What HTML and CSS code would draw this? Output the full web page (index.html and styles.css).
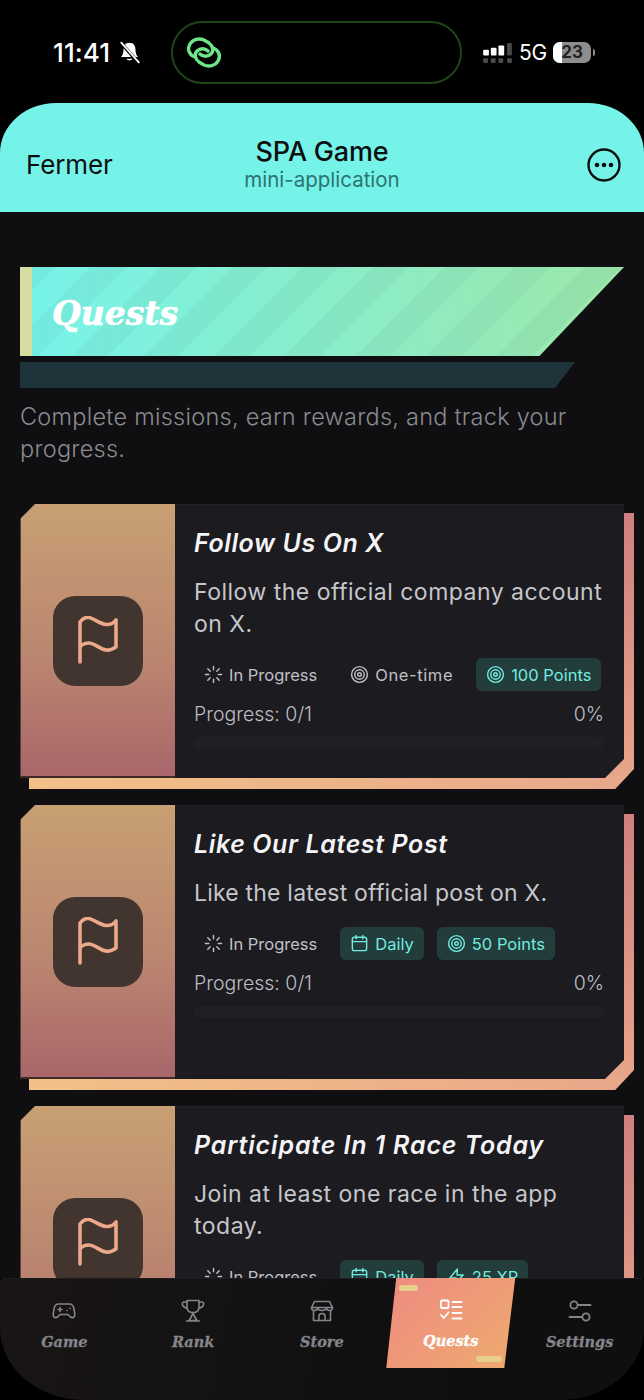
FILE: index.html
```html
<!DOCTYPE html>
<html lang="en">
<head>
<meta charset="utf-8">
<title>SPA Game</title>
<link rel="stylesheet" href="styles.css">
</head>
<body>
<svg class="defs" width="0" height="0" aria-hidden="true">
  <defs>
    <symbol id="i-flag" viewBox="0 0 40 50"><path d="M2 46V6C5 2 8 1 11 1.500C16 2.500 22 8 28 8.500C32 8.800 36 6.500 38 4V31C35 33 31 34.500 28 34C22 33 16 27 11 27C7 27 4 28.500 2 31" fill="none" stroke="currentColor" stroke-width="3.600" stroke-linecap="round" stroke-linejoin="round"/></symbol>
    <symbol id="i-load" viewBox="0 0 20 20"><path d="M10 1.5V5M10 15V18.500M1.500 10H5M15 10H18.500M4 4L6.500 6.500M13.500 13.500L16 16M4 16L6.500 13.500M13.500 6.500L16 4" fill="none" stroke="currentColor" stroke-width="1.500" stroke-linecap="round"/></symbol>
    <symbol id="i-target" viewBox="0 0 20 20"><g fill="none" stroke="currentColor" stroke-width="1.500"><circle cx="10" cy="10" r="8.300"/><circle cx="10" cy="10" r="5"/><circle cx="10" cy="10" r="1.900"/></g></symbol>
    <symbol id="i-cal" viewBox="0 0 20 20"><g fill="none" stroke="currentColor" stroke-width="1.500" stroke-linecap="round" stroke-linejoin="round"><rect x="2.500" y="3.500" width="15" height="14" rx="2"/><path d="M2.500 8H17.500M6.500 1.500V5M13.500 1.500V5"/></g></symbol>
    <symbol id="i-zap" viewBox="0 0 20 20"><path d="M11 2L3 11.500H9.500L8.500 18L17 8.500H10.500Z" fill="none" stroke="currentColor" stroke-width="1.500" stroke-linejoin="round"/></symbol>
  </defs>
</svg>
<div class="phone">
  <div class="status">
    <div class="status-left">
      <span class="time">11:41</span>
      <svg class="bell" viewBox="0 0 20 20"><path d="M10 1.500C6.500 1.500 4.800 4 4.800 7.500C4.800 11 3.800 12.500 2.500 14H17.500C16.200 12.500 15.200 11 15.200 7.500C15.200 4 13.500 1.500 10 1.500ZM7.500 15.500C8 17.500 12 17.500 12.500 15.500Z" fill="#fff"/><path d="M2 1L18 19" stroke="#000" stroke-width="3"/><path d="M2.500 1L18.500 19" stroke="#fff" stroke-width="1.600"/></svg>
    </div>
    <div class="island">
      <svg class="link" viewBox="0 0 36 32"><g fill="none" stroke="#6fe58a" stroke-width="3.400" stroke-linecap="round"><path d="M9 20C3 18 1 12 4 7C7 2 13 1 18 3L23 6C27 9 28 14 25 17C22 20 17 20 14 17"/><path d="M27 11C33 13 35 19 32 24C29 29 23 30 18 28L13 25C9 22 8 17 11 14C14 11 19 11 22 14"/></g></svg>
    </div>
    <div class="status-right">
      <svg class="signal" viewBox="0 0 30 22"><g fill="#fff"><rect x="0" y="7" width="6" height="6" rx="1"/><rect x="8" y="5" width="6" height="8" rx="1"/><rect x="16" y="2.500" width="6" height="10.500" rx="1"/></g><g fill="#4a4a4a"><rect x="25" y="0" width="5" height="13" rx="1"/><rect x="0" y="16" width="5" height="5" rx="1"/><rect x="8" y="16" width="5" height="5" rx="1"/><rect x="16" y="16" width="5" height="5" rx="1"/><rect x="25" y="16" width="5" height="5" rx="1"/></g></svg>
      <span class="net">5G</span>
      <span class="battery"><span class="battery-fill"></span><span class="battery-num">23</span></span>
      <span class="battery-tip"></span>
    </div>
  </div>

  <header class="topbar">
    <div class="top-left">Fermer</div>
    <div class="top-center">
      <div class="top-title">SPA Game</div>
      <div class="top-sub">mini-application</div>
    </div>
    <div class="top-right">
      <svg class="more" viewBox="0 0 34 34"><circle cx="17" cy="17" r="15.500" fill="none" stroke="#0b0f0f" stroke-width="2.400"/><circle cx="10" cy="17" r="2.300" fill="#0b0f0f"/><circle cx="17" cy="17" r="2.300" fill="#0b0f0f"/><circle cx="24" cy="17" r="2.300" fill="#0b0f0f"/></svg>
    </div>
  </header>

  <main class="main">
    <div class="banner"><div class="banner-edge"></div><h1 class="banner-title">Quests</h1></div>
    <div class="underbar"></div>
    <p class="lead">Complete missions, earn rewards, and track your progress.</p>

    <article class="card-wrap">
      <div class="card-back"></div>
      <div class="card">
        <div class="panel"><div class="panel-box"><svg class="flag"><use href="#i-flag"/></svg></div></div>
        <div class="body">
          <h2 class="card-title">Follow Us On X</h2>
          <p class="card-desc">Follow the official company account on X.</p>
          <div class="chips">
            <span class="chip"><svg class="chip-ic"><use href="#i-load"/></svg>In Progress</span>
            <span class="chip chip-wide"><svg class="chip-ic"><use href="#i-target"/></svg>One-time</span>
            <span class="chip chip-on"><svg class="chip-ic"><use href="#i-target"/></svg>100 Points</span>
          </div>
          <div class="prog"><span>Progress: 0/1</span><span>0%</span></div>
          <div class="track"></div>
        </div>
      </div>
    </article>

    <article class="card-wrap">
      <div class="card-back"></div>
      <div class="card">
        <div class="panel"><div class="panel-box"><svg class="flag"><use href="#i-flag"/></svg></div></div>
        <div class="body">
          <h2 class="card-title">Like Our Latest Post</h2>
          <p class="card-desc card-desc-tight">Like the latest official post on X.</p>
          <div class="chips">
            <span class="chip"><svg class="chip-ic"><use href="#i-load"/></svg>In Progress</span>
            <span class="chip chip-on"><svg class="chip-ic"><use href="#i-cal"/></svg>Daily</span>
            <span class="chip chip-on"><svg class="chip-ic"><use href="#i-target"/></svg>50 Points</span>
          </div>
          <div class="prog"><span>Progress: 0/1</span><span>0%</span></div>
          <div class="track"></div>
        </div>
      </div>
    </article>

    <article class="card-wrap">
      <div class="card-back"></div>
      <div class="card">
        <div class="panel"><div class="panel-box"><svg class="flag"><use href="#i-flag"/></svg></div></div>
        <div class="body">
          <h2 class="card-title card-title-wide">Participate In 1 Race Today</h2>
          <p class="card-desc">Join at least one race in the app today.</p>
          <div class="chips">
            <span class="chip"><svg class="chip-ic"><use href="#i-load"/></svg>In Progress</span>
            <span class="chip chip-on"><svg class="chip-ic"><use href="#i-cal"/></svg>Daily</span>
            <span class="chip chip-on"><svg class="chip-ic"><use href="#i-zap"/></svg>25 XP</span>
          </div>
        </div>
      </div>
    </article>
  </main>

  <nav class="nav">
    <div class="nav-inner">
      <a class="tab">
        <svg class="tab-ic" viewBox="0 0 24 24"><g fill="none" stroke="currentColor" stroke-width="1.600" stroke-linecap="round" stroke-linejoin="round"><path d="M6.500 5H17.500C20 5 21.500 7 22 10L22.800 15.500C23 18 20.500 19.500 18.500 18L16 15.500H8L5.500 18C3.500 19.500 1 18 1.200 15.500L2 10C2.500 7 4 5 6.500 5Z"/><path d="M6 10.500H10M8 8.500V12.500"/><path d="M15 11.500H15.100M18 9.500H18.100"/></g></svg>
        <span class="tab-label">Game</span>
      </a>
      <a class="tab">
        <svg class="tab-ic" viewBox="0 0 24 24"><g fill="none" stroke="currentColor" stroke-width="1.600" stroke-linecap="round" stroke-linejoin="round"><path d="M6 1.500H18V8C18 11.500 15.500 13.500 12 13.500C8.500 13.500 6 11.500 6 8Z"/><path d="M6 3H3.500C1.500 3 1 4.500 1.500 6C2 7.500 3.500 8.500 6.300 9.500M18 3H20.500C22.500 3 23 4.500 22.500 6C22 7.500 20.500 8.500 17.700 9.500"/><path d="M12 13.500C11.500 16 10 18.500 8 21.500H16C14 18.500 12.500 16 12 13.500ZM5.500 22H18.500"/></g></svg>
        <span class="tab-label">Rank</span>
      </a>
      <a class="tab">
        <svg class="tab-ic" viewBox="0 0 24 24"><g fill="none" stroke="currentColor" stroke-width="1.600" stroke-linecap="round" stroke-linejoin="round"><path d="M4.500 2.500H19.500L22.500 8.500C22.500 10.500 21 11.500 19.500 11.500C18 11.500 16.500 10.500 16.500 9C16 10.500 14 11.500 12 11.500C10 11.500 8 10.500 7.500 9C7.500 10.500 6 11.500 4.500 11.500C3 11.500 1.500 10.500 1.500 8.500Z"/><path d="M3.500 11.500V21.500H20.500V11.500M1.500 8.500H22.500"/><path d="M9 21.500V17C9 15.500 10 14.500 12 14.500C14 14.500 15 15.500 15 17V21.500"/></g></svg>
        <span class="tab-label">Store</span>
      </a>
      <a class="tab tab-active">
        <span class="tab-pill tab-pill-top"></span>
        <span class="tab-pill tab-pill-bot"></span>
        <svg class="tab-ic" viewBox="0 0 24 24"><g fill="none" stroke="currentColor" stroke-width="1.800" stroke-linecap="round" stroke-linejoin="round"><rect x="2" y="2.500" width="7.500" height="7.500" rx="1"/><path d="M13.500 4H22.500M13.500 9H22.500M13.500 15H22.500M13.500 20.500H22.500"/><path d="M2 17L4.800 20L9.500 14.500"/></g></svg>
        <span class="tab-label">Quests</span>
      </a>
      <a class="tab">
        <svg class="tab-ic" viewBox="0 0 24 24"><g fill="none" stroke="currentColor" stroke-width="1.800" stroke-linecap="round"><circle cx="6" cy="6" r="3.600"/><path d="M10 6H22.500"/><circle cx="18" cy="18" r="3.600"/><path d="M1.500 18H14"/></g></svg>
        <span class="tab-label">Settings</span>
      </a>
    </div>
  </nav>
</div>
</body>
</html>
```

FILE: styles.css
```css
* { box-sizing: border-box; }
html, body { margin: 0; padding: 0; background: #000; }
.defs { display: block; height: 0; }
.phone {
  width: 644px; height: 1400px; position: relative; overflow: hidden;
  background: #000; font-family: Inter, "Liberation Sans", sans-serif; color: #fff;
}

/* status bar */
.status { height: 103px; display: flex; align-items: flex-start; padding-top: 21px; }
.status-left { width: 171px; height: 62px; padding-left: 53px; display: flex; align-items: center; gap: 9px; }
.time { font-family: Inter, sans-serif; font-size: 26px; font-weight: 500; letter-spacing: 0.1px; color: #fff; }
.bell { width: 23px; height: 23px; margin-left: -1px; }
.island {
  width: 291px; height: 63px; border: 2px solid #1e4418; border-radius: 32px; background: #000;
  display: flex; align-items: center; padding-left: 12px;
}
.link { width: 38px; height: 32px; }
.status-right { flex: 1; height: 62px; display: flex; align-items: center; padding-left: 21px; }
.signal { width: 29px; height: 21px; margin-top: 2px; }
.net { font-size: 21px; font-weight: 400; margin-left: 7px; letter-spacing: -0.2px; }
.battery { position: relative; width: 38px; height: 21px; margin-left: 6px; border-radius: 7px; background: #8d8d8d; overflow: hidden; display: flex; align-items: center; justify-content: center; }
.battery-fill { position: absolute; left: 0; top: 0; bottom: 0; width: 9px; background: #fff; }
.battery-num { position: relative; font-size: 17px; font-weight: 700; color: #222; }
.battery-tip { width: 2px; height: 7px; margin-left: 2px; background: #8d8d8d; border-radius: 0 2px 2px 0; }

/* header */
.topbar {
  height: 109px; background: #76f3e9; border-radius: 56px 56px 0 0 / 50px 50px 0 0;
  display: grid; grid-template-columns: 1fr auto 1fr; align-items: center; padding: 14px 23px 0; color: #0b0f0f;
}
.top-left { font-size: 26px; font-weight: 400; padding-left: 3px; letter-spacing: -0.1px; }
.top-center { text-align: center; }
.top-title { font-size: 27px; font-weight: 500; line-height: 30px; letter-spacing: -0.2px; }
.top-sub { font-size: 20.500px; line-height: 26px; color: #2c7470; }
.top-right { display: flex; justify-content: flex-end; }
.more { width: 34px; height: 34px; }

/* main */
.main { height: 1188px; background: #0f0f12; padding: 55px 20px 0; }
.banner {
  height: 89px; display: flex; align-items: center; padding-left: 32px; position: relative;
  clip-path: polygon(0 0, 100% 0, 86% 100%, 0 100%);
  background:
    repeating-linear-gradient(135deg, rgba(70,130,120,.08) 0 25px, transparent 25px 50px),
    linear-gradient(90deg, #76f3ea, #9de8aa);
}
.banner-edge { position: absolute; left: 0; top: 0; bottom: 0; width: 12px; background: #d6dd9e; }
.banner-title {
  margin: 4px 0 0; font-family: "DejaVu Serif", serif; font-style: italic; font-weight: 700;
  font-size: 33px; color: #fff; -webkit-text-stroke: 0.6px #fff;
}
.underbar { height: 26px; margin-top: 6px; width: 555px; background: #1f333a; clip-path: polygon(0 0, 100% 0, 96.400% 100%, 0 100%); }
.lead { margin: 13px 0 39px; font-size: 23.500px; letter-spacing: 0.26px; line-height: 32px; color: #8a8a8f; font-weight: 300; }

/* cards */
.card-wrap { position: relative; height: 274px; margin-bottom: 27px; }
.card-back {
  position: absolute; left: 9px; right: -10px; top: 9px; bottom: -11px;
  background:
    linear-gradient(90deg, #f2c188, #e8a78a) bottom / 100% 14px no-repeat,
    linear-gradient(180deg, #d07f80, #e8a78a);
  clip-path: polygon(0 0, 100% 0, 100% 256px, 586px 100%, 0 100%);
}
.card {
  position: relative; height: 274px; display: flex; background: #1b1b20;
  box-shadow: inset 0 1px #222227;
  clip-path: polygon(15px 0, 100% 0, 100% 255px, 585px 100%, 0 100%, 0 15px);
}
.panel {
  width: 155px; flex: none; display: flex; align-items: center; justify-content: center;
  padding-top: 2px;
  background: linear-gradient(180deg, #c8a073, #ba8470 60%, #a9666a);
  border-left: 1px solid #5a3f38; border-bottom: 2px solid #3f2a28;
}
.panel-box { width: 90px; height: 90px; border-radius: 22px; background: #423530; display: flex; align-items: center; justify-content: center; color: #eca98a; }
.flag { width: 40px; height: 50px; }
.body { flex: 1; min-width: 0; padding: 21px 20px 0 19px; }
.card-title { margin: 0; font-size: 25px; line-height: 36px; font-weight: 600; font-style: italic; color: #f4f4f6; letter-spacing: 0.6px; white-space: nowrap; }
.card-title-wide { letter-spacing: 0.85px; }
.card-desc { margin: 15px 0 0; font-size: 23px; line-height: 32px; color: #c6c6cb; font-weight: 400; letter-spacing: 0.49px; }
.card-desc-tight { letter-spacing: 0.2px; }
.chips { display: flex; gap: 13px; margin-top: 18px; }
.chip {
  height: 33px; padding: 0 10px; display: inline-flex; align-items: center; gap: 6px;
  font-size: 16.500px; color: #c0c0c5; border-radius: 6px; white-space: nowrap;
}
.chip-wide { letter-spacing: 0.6px; }
.chip-on { background: #233c3c; color: #72ebdf; }
.chip-ic { width: 19px; height: 19px; flex: none; }
.prog { display: flex; justify-content: space-between; margin-top: 10px; font-size: 19.500px; line-height: 26px; color: #bdbdc2; font-weight: 300; }
.track { height: 12px; margin-top: 10px; background: #1f1f24; border-radius: 6px; }

/* bottom nav */
.nav { position: absolute; left: 0; right: 0; bottom: 0; height: 122px; background: #000; }
.nav-inner {
  height: 122px; display: grid; grid-template-columns: repeat(5, 1fr);
  background: linear-gradient(100deg, #191515, #0f0f10 70%);
  border-top: 1px solid #1d1d1f;
  border-radius: 4px 4px 84px 84px / 4px 4px 72px 72px;
}
.tab { position: relative; display: flex; flex-direction: column; align-items: center; height: 90px; padding-top: 20px; color: #84848a; }
.tab-ic { width: 24px; height: 24px; }
.tab-label { margin-top: 10px; font-family: "DejaVu Serif", serif; font-style: italic; font-weight: 700; font-size: 14.500px; -webkit-text-stroke: 0.3px currentColor; }
.tab-active { color: #fff; background: linear-gradient(135deg, #ee8a82, #eeab6e); clip-path: polygon(10px 0, 100% 0, 118px 100%, 0 100%); margin-top: -1px; width: 129px; }
.tab-pill { position: absolute; background: #e8d08c; border-radius: 4px; height: 6px; }
.tab-pill-top { left: 13px; top: 7px; width: 19px; }
.tab-pill-bot { left: 90px; top: 78px; width: 26px; }
```
